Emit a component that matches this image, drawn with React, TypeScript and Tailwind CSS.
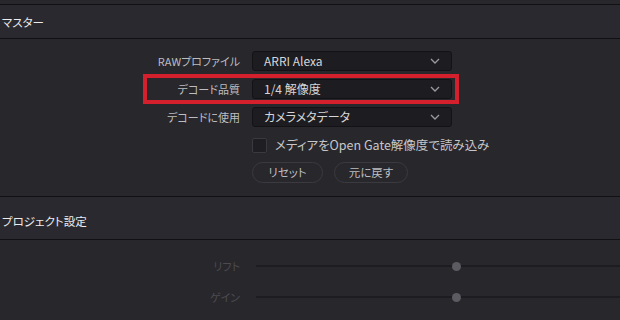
import React from 'react';

const font = { fontFamily: '"Noto Sans CJK JP", "Noto Sans", sans-serif' };

function Chevron() {
	return (
		<svg width="10" height="6" viewBox="0 0 10 6" fill="none" className="shrink-0">
			<path d="M1 1L5 5L9 1" stroke="#9a9aa0" strokeWidth="1.3" />
		</svg>
	);
}

function Select({ value }: { value: string }) {
	return (
		<div className="flex h-[20px] w-[200px] items-center justify-between rounded-[3px] border border-[#131316] bg-[#1d1d21] pl-[11px] pr-[11px] text-[12px] text-[#d6d6d8]">
			<span className="leading-none">{value}</span>
			<Chevron />
		</div>
	);
}

function Row({ label, children }: { label: string; children: React.ReactNode }) {
	return (
		<div className="flex h-[20px] items-center">
			<div className="w-[241px] pr-[1px] text-right text-[11px] leading-none text-[#bdbdc0]">{label}</div>
			<div className="ml-[11px]">{children}</div>
		</div>
	);
}

function SectionHeader({ title, tall }: { title: string; tall?: boolean }) {
	return (
		<div
			className={`flex items-center border-y border-[#111114] bg-[#2a292f] pl-[2px] text-[11.5px] text-[#ececee] ${
				tall ? 'h-[44px] pt-[8px]' : 'h-[35px] pt-[3px]'
			}`}
		>
			{title}
		</div>
	);
}

function Slider({ label }: { label: string }) {
	return (
		<div className="flex h-[20px] items-center">
			<div className="w-[241px] pr-[1px] text-right text-[11px] leading-none text-[#4c4b51]">{label}</div>
			<div className="relative ml-[15px] flex h-[20px] flex-1 items-center">
				<div className="h-[2px] w-full bg-[#1d1d21]" />
				<div className="absolute left-[196px] h-[9px] w-[9px] rounded-full bg-[#5c5b61]" />
			</div>
		</div>
	);
}

export default function App() {
	return (
		<div
			className="h-[320px] w-[620px] overflow-hidden bg-[#28272c] [font-feature-settings:'palt']"
			style={font}
		>
			<div className="h-[4px]" />
			<SectionHeader title="マスター" />
			<div className="relative flex flex-col gap-[8px] pb-[13px] pt-[12px]">
				<Row label="RAWプロファイル">
					<Select value="ARRI Alexa" />
				</Row>
				<Row label="デコード品質">
					<Select value="1/4 解像度" />
				</Row>
				<Row label="デコードに使用">
					<Select value="カメラメタデータ" />
				</Row>
				<div className="flex h-[20px] items-center pl-[252px]">
					<div className="h-[15px] w-[15px] rounded-[2px] border border-[#3a393f] bg-[#1f1e23]" />
					<span className="ml-[8px] text-[12.5px] text-[#c6c6c9]">メディアをOpen Gate解像度で読み込み</span>
				</div>
				<div className="-mt-[1px] flex gap-[11px] pl-[252px]">
					<button className="h-[21px] w-[71px] rounded-full border border-[#3b3a40] text-[11.5px] text-[#bdbdc0]">リセット</button>
					<button className="h-[21px] w-[74px] rounded-full border border-[#3b3a40] text-[11.5px] text-[#bdbdc0]">元に戻す</button>
				</div>
				<div className="pointer-events-none absolute left-[143px] top-[35px] h-[30px] w-[316px] border-[4px] border-[#d4202c]" />
			</div>
			<SectionHeader title="プロジェクト設定" tall />
			<div className="flex flex-col gap-[11px] pt-[16px]">
				<Slider label="リフト" />
				<Slider label="ゲイン" />
			</div>
		</div>
	);
}
